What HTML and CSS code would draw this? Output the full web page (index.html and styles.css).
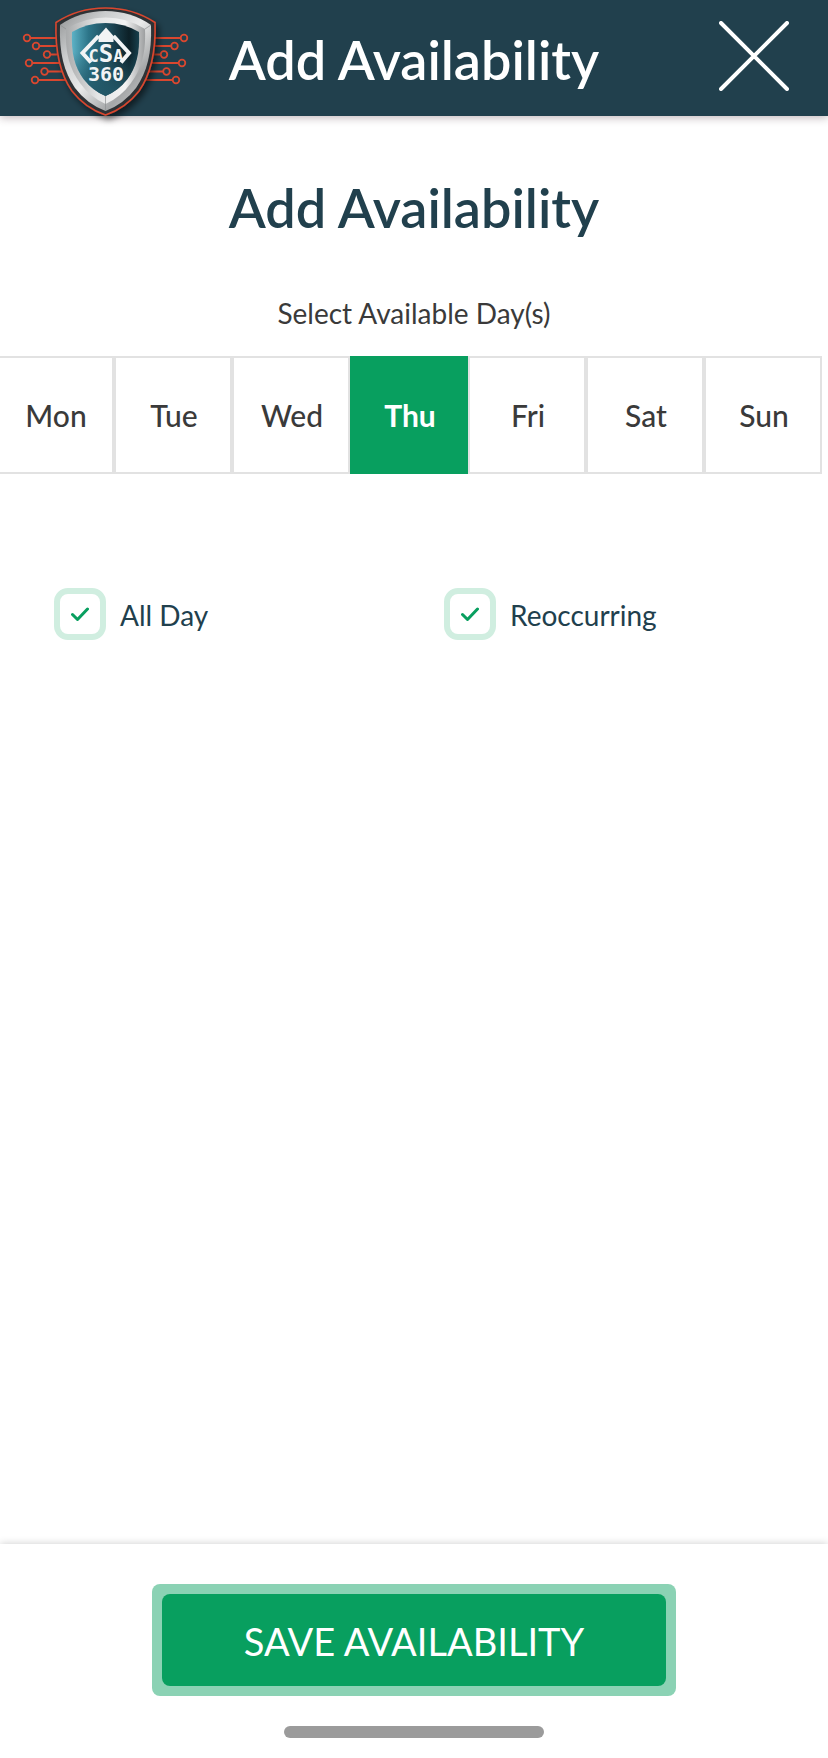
FILE: index.html
```html
<!DOCTYPE html>
<html lang="en">
<head>
  <meta charset="UTF-8">
  <meta name="viewport" content="width=device-width, initial-scale=1">
  <title>Add Availability</title>
  <link rel="stylesheet" href="styles.css">
</head>
<body>
  <header class="topbar">
    <a class="logo" href="#" aria-label="CSA 360">
      <svg viewBox="0 0 208 128" width="208" height="128">
        <defs>
          <linearGradient id="steel" x1="0" y1="0" x2="1" y2="1">
            <stop offset="0" stop-color="#8f9192"/>
            <stop offset="0.25" stop-color="#c9cbcc"/>
            <stop offset="0.5" stop-color="#e9eaea"/>
            <stop offset="0.75" stop-color="#a5a7a8"/>
            <stop offset="1" stop-color="#d6d7d8"/>
          </linearGradient>
          <linearGradient id="steelInner" x1="0" y1="0" x2="1" y2="0">
            <stop offset="0" stop-color="#a9abac"/>
            <stop offset="0.4" stop-color="#e4e5e5"/>
            <stop offset="0.75" stop-color="#f3f3f3"/>
            <stop offset="1" stop-color="#9d9fa0"/>
          </linearGradient>
          <linearGradient id="glass" x1="0" y1="0" x2="1" y2="0">
            <stop offset="0" stop-color="#5cb2c6"/>
            <stop offset="0.25" stop-color="#2c7488"/>
            <stop offset="0.6" stop-color="#1c4452"/>
            <stop offset="0.85" stop-color="#0c2027"/>
            <stop offset="1" stop-color="#17404d"/>
          </linearGradient>
          <linearGradient id="glassFade" x1="0" y1="0" x2="0" y2="1">
            <stop offset="0.4" stop-color="#235868" stop-opacity="0"/>
            <stop offset="1" stop-color="#235868"/>
          </linearGradient>
          <filter id="drop" x="-20%" y="-20%" width="150%" height="150%">
            <feDropShadow dx="3" dy="4" stdDeviation="3" flood-color="#000" flood-opacity="0.55"/>
          </filter>
        </defs>

        <!-- circuit lines -->
        <g fill="none" stroke="#d9472f" stroke-width="1.8">
          <path d="M30 38H58M39 46H58M50 54.500H58M32 63H62M48 71.500H63M38 80H67"/>
          <path d="M154 38H181M153 46H171M152 54.500H161M150 63H179M148 71.500H163M145 80H173"/>
          <circle cx="27" cy="38" r="3.300"/>
          <circle cx="36" cy="46" r="3.300"/>
          <circle cx="47" cy="54.500" r="3.300"/>
          <circle cx="29" cy="63" r="3.300"/>
          <circle cx="44.500" cy="71.500" r="3.300"/>
          <circle cx="35" cy="80" r="3.300"/>
          <circle cx="184" cy="38" r="3.300"/>
          <circle cx="174.500" cy="46" r="3.300"/>
          <circle cx="164" cy="54.500" r="3.300"/>
          <circle cx="182" cy="63" r="3.300"/>
          <circle cx="166.500" cy="71.500" r="3.300"/>
          <circle cx="176" cy="80" r="3.300"/>
        </g>

        <!-- shield -->
        <path filter="url(#drop)" fill="#2e3335" stroke="#d9472f" stroke-width="1.600" d="M56 22.500 Q78 8 105.500 8 Q133 8 155 22.500 C156 53 151 74 139 91 Q126 108 105.500 115 Q85 108 72 91 C60 74 55 53 56 22.500 Z"/>
        <path fill="url(#steel)" d="M60 25 Q80 11 105.500 11 Q131 11 151 25 C152 53 147 72 136 88 Q124 104 105.500 111 Q87 104 75 88 C64 72 59 53 60 25 Z"/>
        <path fill="url(#steelInner)" d="M66 29 Q84 17.500 105.500 17.500 Q127 17.500 145 29 C146 54 141 69 131 83 Q121 97 105.500 104 Q90 97 80 83 C70 69 65 54 66 29 Z"/>
        <path stroke="#8d8f90" stroke-width="0.700" d="M60 25L66 29M151 25L145 29M105.500 96V111"/>
        <path fill="url(#glass)" d="M72 32 Q87 23 105.500 23 Q124 23 139 32 C140 54 136 67 127.500 79 Q118 91 105.500 96 Q93 91 83.500 79 C75 67 71 54 72 32 Z"/>
        <path fill="url(#glassFade)" d="M72 32 Q87 23 105.500 23 Q124 23 139 32 C140 54 136 67 127.500 79 Q118 91 105.500 96 Q93 91 83.500 79 C75 67 71 54 72 32 Z"/>

        <!-- diamond frame and wordmark -->
        <path fill="none" stroke="#f2f4f5" stroke-width="4" d="M98.500 36L82.500 53L91 62.500M113.500 36L129 53L121 62.500"/>
        <path fill="#f2f4f5" d="M98.500 42V36L106 27.500L113.500 36V42Z"/>
        <text class="logo-text" x="106" y="62" text-anchor="middle">C<tspan class="logo-mid">S</tspan>A</text>
        <text class="logo-text logo-num" x="106" y="81" text-anchor="middle">360</text>
      </svg>
    </a>
    <h1 class="title">Add Availability</h1>
    <button class="close" type="button" aria-label="Close">
      <svg viewBox="0 0 70 70" width="70" height="70">
        <path d="M2 2L68 68M68 2L2 68" fill="none" stroke="#fff" stroke-width="4" stroke-linecap="round"/>
      </svg>
    </button>
  </header>

  <main class="content">
    <h2 class="title">Add Availability</h2>
    <p class="hint" id="days-label">Select Available Day(s)</p>

    <div class="days" role="group" aria-labelledby="days-label">
      <button class="day" type="button" aria-pressed="false">Mon</button>
      <button class="day" type="button" aria-pressed="false">Tue</button>
      <button class="day" type="button" aria-pressed="false">Wed</button>
      <button class="day selected" type="button" aria-pressed="true">Thu</button>
      <button class="day" type="button" aria-pressed="false">Fri</button>
      <button class="day" type="button" aria-pressed="false">Sat</button>
      <button class="day" type="button" aria-pressed="false">Sun</button>
    </div>

    <div class="options">
      <div class="option">
        <span class="check">
          <input type="checkbox" id="allDay" checked>
          <svg viewBox="0 0 18 14" width="18" height="14"><path d="M1.500 7.500L6.500 12.500L16.500 2"/></svg>
        </span>
        <label for="allDay">All Day</label>
      </div>
      <div class="option">
        <span class="check">
          <input type="checkbox" id="reoccurring" checked>
          <svg viewBox="0 0 18 14" width="18" height="14"><path d="M1.500 7.500L6.500 12.500L16.500 2"/></svg>
        </span>
        <label for="reoccurring">Reoccurring</label>
      </div>
    </div>
  </main>

  <footer class="actions">
    <div class="save-ring">
      <button class="save" type="button">SAVE AVAILABILITY</button>
    </div>
    <div class="home-bar"></div>
  </footer>
</body>
</html>
```

FILE: styles.css
```css
* {
  box-sizing: border-box;
}
body {
  margin: 0;
  min-height: 100vh;
  display: flex;
  flex-direction: column;
  overflow-x: hidden;
  background-color: #fff;
  color: #3a3a3a;
  font-family: Lato, "Open Sans", sans-serif;
}
button {
  font-family: inherit;
  border: none;
  padding: 0;
  cursor: pointer;
}

/* Top bar */
.topbar {
  display: grid;
  grid-template-columns: 208px 1fr 208px;
  align-items: center;
  height: 116px;
  background-color: #21404d;
  color: #fff;
  box-shadow: 0 2px 8px rgba(60, 30, 40, 0.3);
}
.logo {
  align-self: start;
  height: 116px;
}
.logo svg {
  display: block;
}
.logo-text {
  fill: #f2f4f5;
  font-family: "DejaVu Sans Mono", monospace;
  font-size: 17px;
  font-weight: bold;
}
.logo-mid {
  font-size: 24px;
}
.logo-num {
  font-size: 20px;
}
.title {
  margin: 0;
  font-size: 54px;
  line-height: 65px;
  font-weight: 600;
  text-align: center;
  white-space: nowrap;
}
.topbar .title {
  padding-top: 2px;
}
.close {
  justify-self: end;
  align-self: start;
  height: 70px;
  margin: 21px 39px 0 0;
  background: none;
}
.close svg {
  display: block;
}

/* Form */
.content {
  flex: 1;
  padding-top: 59px;
}
.content .title {
  color: #21404d;
}
.hint {
  margin: 56px 0 26px;
  font-size: 28px;
  line-height: 34px;
  text-align: center;
}
.days {
  display: flex;
  margin: 0 6px 0 -4px;
}
.day {
  flex: 1;
  height: 118px;
  padding-left: 2px;
  border: 2px solid #e2e2e2;
  background-color: #fff;
  color: #3a3a3a;
  font-size: 30px;
  line-height: 36px;
  font-weight: 500;
}
.day.selected {
  border-color: #089f5f;
  background-color: #089f5f;
  color: #fff;
  font-weight: bold;
}
.options {
  display: grid;
  grid-template-columns: 1fr 1fr;
  margin-top: 114px;
  padding: 0 24px;
}
.option {
  display: flex;
  align-items: center;
  gap: 14px;
  padding-left: 30px;
  color: #21404d;
  font-size: 28px;
  line-height: 34px;
}
.option label {
  padding-top: 2px;
}
.check {
  display: grid;
  place-items: center;
}
.check input,
.check svg {
  grid-area: 1 / 1;
}
.check input {
  appearance: none;
  width: 52px;
  height: 52px;
  margin: 0;
  border: 6px solid #d0eee0;
  border-radius: 14px;
  background-color: #fff;
}
.check svg {
  fill: none;
  stroke: #089f5f;
  stroke-width: 3;
  stroke-linecap: round;
  stroke-linejoin: round;
  pointer-events: none;
}
.check input:not(:checked) + svg {
  visibility: hidden;
}

/* Bottom actions */
.actions {
  display: flex;
  flex-direction: column;
  align-items: center;
  gap: 30px;
  padding: 40px 20px 20px;
  background-color: #fff;
  box-shadow: 0 0 8px rgba(0, 0, 0, 0.2);
}
.save-ring {
  width: 100%;
  max-width: 524px;
  padding: 10px;
  border-radius: 8px;
  background-color: #8bd2b4;
}
.save {
  display: block;
  width: 100%;
  height: 92px;
  padding-top: 2px;
  border-radius: 8px;
  background-color: #089f5f;
  color: #fff;
  font-size: 38px;
  line-height: 46px;
}
.home-bar {
  width: 260px;
  height: 12px;
  border-radius: 6px;
  background-color: #9b9b9b;
}
```
